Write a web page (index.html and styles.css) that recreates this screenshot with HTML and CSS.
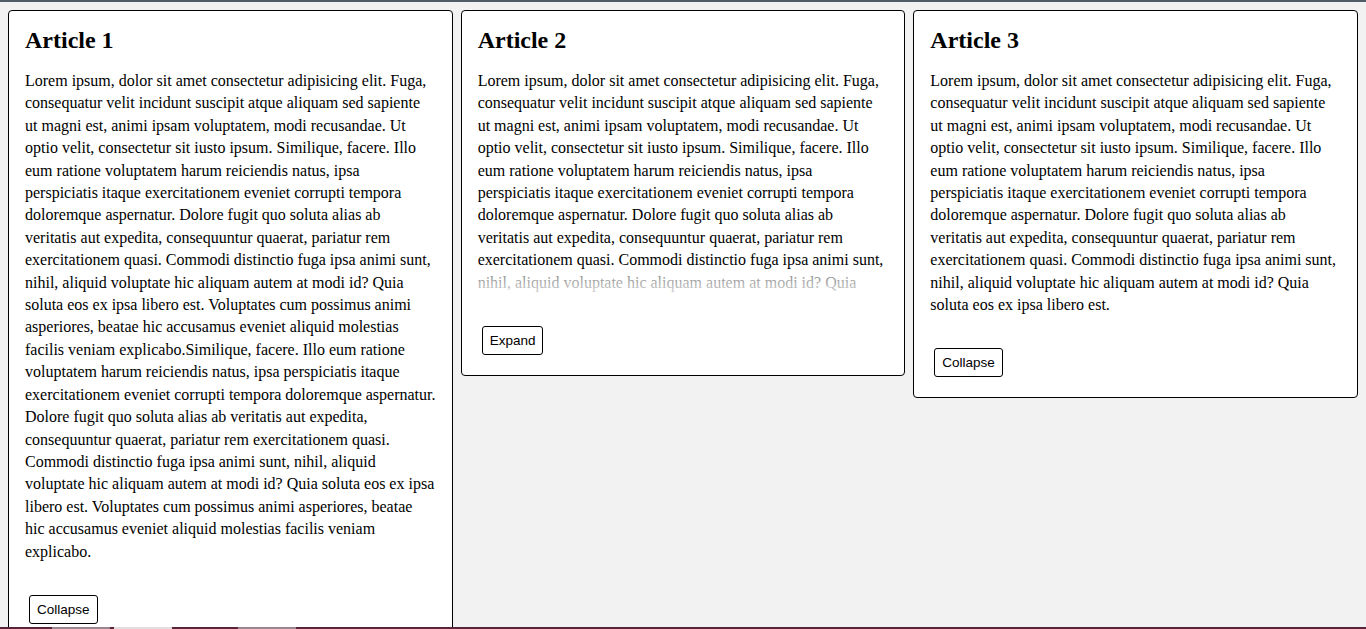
FILE: index.html
```html
<!DOCTYPE html>
<html lang="en">
<head>
<meta charset="utf-8">
<title>Articles</title>
<link rel="stylesheet" href="styles.css">
</head>
<body>
<main class="grid">
  <article class="card">
    <h2 class="card-title">Article 1</h2>
    <div class="card-text">
      <p>Lorem ipsum, dolor sit amet consectetur adipisicing elit. Fuga, consequatur velit incidunt suscipit atque aliquam sed sapiente ut magni est, animi ipsam voluptatem, modi recusandae. Ut optio velit, consectetur sit iusto ipsum. Similique, facere. Illo eum ratione voluptatem harum reiciendis natus, ipsa perspiciatis itaque exercitationem eveniet corrupti tempora doloremque aspernatur. Dolore fugit quo soluta alias ab veritatis aut expedita, consequuntur quaerat, pariatur rem exercitationem quasi. Commodi distinctio fuga ipsa animi sunt, nihil, aliquid voluptate hic aliquam autem at modi id? Quia soluta eos ex ipsa libero est. Voluptates cum possimus animi asperiores, beatae hic accusamus eveniet aliquid molestias facilis veniam explicabo.Similique, facere. Illo eum ratione voluptatem harum reiciendis natus, ipsa perspiciatis itaque exercitationem eveniet corrupti tempora doloremque aspernatur. Dolore fugit quo soluta alias ab veritatis aut expedita, consequuntur quaerat, pariatur rem exercitationem quasi. Commodi distinctio fuga ipsa animi sunt, nihil, aliquid voluptate hic aliquam autem at modi id? Quia soluta eos ex ipsa libero est. Voluptates cum possimus animi asperiores, beatae hic accusamus eveniet aliquid molestias facilis veniam explicabo.</p>
    </div>
    <button class="toggle" type="button">Collapse</button>
  </article>
  <article class="card">
    <h2 class="card-title">Article 2</h2>
    <div class="card-text is-collapsed">
      <p>Lorem ipsum, dolor sit amet consectetur adipisicing elit. Fuga, consequatur velit incidunt suscipit atque aliquam sed sapiente ut magni est, animi ipsam voluptatem, modi recusandae. Ut optio velit, consectetur sit iusto ipsum. Similique, facere. Illo eum ratione voluptatem harum reiciendis natus, ipsa perspiciatis itaque exercitationem eveniet corrupti tempora doloremque aspernatur. Dolore fugit quo soluta alias ab veritatis aut expedita, consequuntur quaerat, pariatur rem exercitationem quasi. Commodi distinctio fuga ipsa animi sunt, nihil, aliquid voluptate hic aliquam autem at modi id? Quia soluta eos ex ipsa libero est. Voluptates cum possimus animi asperiores, beatae hic accusamus eveniet aliquid molestias facilis veniam explicabo.</p>
    </div>
    <button class="toggle" type="button">Expand</button>
  </article>
  <article class="card">
    <h2 class="card-title">Article 3</h2>
    <div class="card-text">
      <p>Lorem ipsum, dolor sit amet consectetur adipisicing elit. Fuga, consequatur velit incidunt suscipit atque aliquam sed sapiente ut magni est, animi ipsam voluptatem, modi recusandae. Ut optio velit, consectetur sit iusto ipsum. Similique, facere. Illo eum ratione voluptatem harum reiciendis natus, ipsa perspiciatis itaque exercitationem eveniet corrupti tempora doloremque aspernatur. Dolore fugit quo soluta alias ab veritatis aut expedita, consequuntur quaerat, pariatur rem exercitationem quasi. Commodi distinctio fuga ipsa animi sunt, nihil, aliquid voluptate hic aliquam autem at modi id? Quia soluta eos ex ipsa libero est.</p>
    </div>
    <button class="toggle" type="button">Collapse</button>
  </article>
</main>
<div class="bottom-strip">
  <span class="seg seg-dark seg-a"></span>
  <span class="seg seg-mid"></span>
  <span class="seg seg-dark seg-b"></span>
  <span class="seg seg-light"></span>
  <span class="seg seg-dark seg-c"></span>
  <span class="seg seg-mid"></span>
  <span class="seg seg-dark seg-rest"></span>
</div>
</body>
</html>
```

FILE: styles.css
```css
html {
  border-top: 2px solid #4f5c65;
  background: #f2f2f2;
}

body {
  margin: 8px;
  font-family: "Liberation Serif", "Times New Roman", serif;
  color: #000;
}

.grid {
  display: grid;
  grid-template-columns: repeat(3, 1fr);
  gap: 8px;
  align-items: start;
}

.card {
  background: #fff;
  border: 1px solid #000;
  border-radius: 4px;
  padding: 16px;
  display: flex;
  flex-direction: column;
  align-items: flex-start;
}

.card-title {
  margin: 0 0 16px;
  font-size: 24px;
  font-weight: bold;
  line-height: normal;
}

.card-text {
  position: relative;
  margin-bottom: 28px;
  align-self: stretch;
}

.card-text p {
  margin: 0;
  font-size: 16px;
  line-height: 22.4px;
}

.card-text.is-collapsed {
  max-height: 224px;
  overflow: hidden;
}

.card-text.is-collapsed::after {
  content: "";
  position: absolute;
  left: 0;
  right: 0;
  bottom: 0;
  height: 24px;
  background: linear-gradient(to bottom, rgba(255, 255, 255, 0.45), rgba(255, 255, 255, 0.85));
}

.toggle {
  margin: 4px;
  padding: 6px 7px;
  font-family: "Liberation Sans", Arial, sans-serif;
  font-size: 13.5px;
  line-height: 15px;
  color: #000;
  background: #fff;
  border: 1px solid #000;
  border-radius: 3px;
}

.bottom-strip {
  position: fixed;
  left: 0;
  right: 0;
  bottom: 0;
  height: 2px;
  display: flex;
  background: #5a2539;
}

.seg {
  height: 2px;
}

.seg-a { width: 52px; }
.seg-b { width: 4px; }
.seg-c { width: 66px; }
.seg-rest { flex: 1; }
.seg-mid { width: 58px; background: #9c8490; }
.seg-light { width: 58px; background: #e4dde0; }
```
